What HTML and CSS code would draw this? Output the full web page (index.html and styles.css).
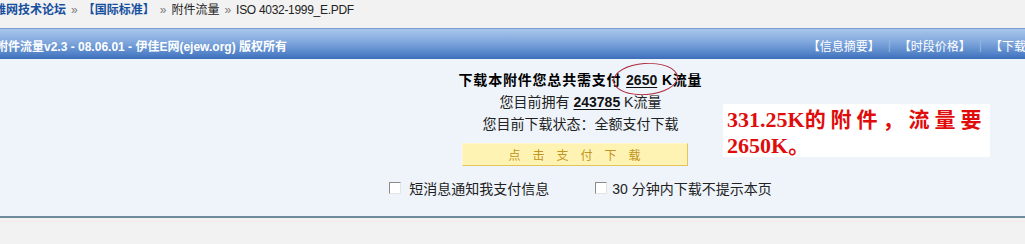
FILE: index.html
```html
<!DOCTYPE html>
<html lang="zh">
<head>
<meta charset="utf-8">
<title>附件流量</title>
<link rel="stylesheet" href="styles.css">
</head>
<body>
<div class="page">
  <div class="crumbs">
    <a class="crumb-strong" href="#">雅网技术论坛</a>
    <span class="sep">»</span>
    <a class="crumb-strong" href="#">【国际标准】</a>
    <span class="sep">»</span>
    <span>附件流量</span>
    <span class="sep">»</span>
    <span class="file">ISO 4032-1999_E.PDF</span>
  </div>

  <div class="box">
    <div class="head">
      <span class="title">附件流量v2.3 - 08.06.01 - 伊佳E网(ejew.org) 版权所有</span>
      <span class="links">
        <a href="#">【信息摘要】</a><span class="bar">|</span><a href="#">【时段价格】</a><span class="bar">|</span><a href="#">【下载记录】</a>
      </span>
    </div>
    <div class="body">
      <div class="center">
        <p class="line need">下载本附件您总共需支付 <u class="num">2650</u> K流量</p>
        <p class="line">您目前拥有 <u class="num">243785</u> K流量</p>
        <p class="line">您目前下载状态：全额支付下载</p>
        <button class="pay" type="button">点击支付下载</button>
        <div class="checks">
          <label class="check"><span class="cb"></span><span class="lbl">短消息通知我支付信息</span></label>
          <label class="check second"><span class="cb"></span><span class="lbl">30 分钟内下载不提示本页</span></label>
        </div>
      </div>
      <div class="ring"></div>
      <div class="note">331.25K<span class="cjk">的附件，流量要</span><br>2650K<span class="cjk">。</span></div>
    </div>
  </div>
  <div class="foot"></div>
</div>
</body>
</html>
```

FILE: styles.css
```css
html, body {
  margin: 0;
  padding: 0;
  background: #f2f2f2;
  overflow: hidden;
}

body {
  font-family: "Liberation Sans", "Noto Sans CJK SC", sans-serif;
  font-size: 12px;
  color: #222;
}

.page {
  margin-left: -8px;
  width: 1100px;
}

.crumbs {
  height: 20px;
  line-height: 20px;
  padding-left: 2px;
  display: flex;
  gap: 5px;
  color: #222;
  white-space: nowrap;
}

.crumbs a {
  text-decoration: none;
}

.crumb-strong {
  color: #174f9e;
  font-weight: bold;
}

.sep {
  color: #7a7a7a;
}

.file {
  letter-spacing: -0.3px;
}

.box {
  margin-top: 8px;
  border-bottom: 2px solid #6f8a9c;
}

.head {
  height: 31px;
  border-top: 1px solid #7a9ccc;
  background: linear-gradient(#a9c6ec 0%, #7ea6dc 45%, #4f80c6 85%, #3d6dba 100%);
  display: flex;
  align-items: center;
  color: #fff;
  white-space: nowrap;
  padding-top: 2px;
  box-sizing: border-box;
}

.title {
  font-weight: bold;
  padding-left: 4px;
}

.links {
  margin-left: auto;
  padding-right: 30px;
  display: flex;
  align-items: center;
}

.links a {
  color: #fff;
  text-decoration: none;
}

.bar {
  color: #9ab6dc;
  margin: 0 8px 0 8px;
}

.body {
  position: relative;
  background: #eef4fa;
  height: 157px;
  box-sizing: border-box;
  padding-top: 10px;
}

.center {
  display: flex;
  flex-direction: column;
  align-items: center;
  padding-left: 144px;
  width: 1033px;
  box-sizing: border-box;
}

.line {
  margin: 0;
  height: 22px;
  line-height: 22px;
  font-size: 14px;
  color: #222;
  white-space: nowrap;
}

.need {
  font-weight: bold;
  color: #000;
  letter-spacing: 0.8px;
}

.num {
  font-weight: bold;
  text-decoration: underline;
  text-underline-offset: 2px;
  color: #111;
  letter-spacing: 0;
}

.pay {
  margin-top: 8px;
  margin-right: 12px;
  width: 226px;
  height: 23px;
  background: #fff3b4;
  border: 1px solid #fff6cc;
  border-right-color: #e2c35e;
  border-bottom-color: #e2c35e;
  color: #bf9420;
  font-family: "Noto Sans CJK SC", sans-serif;
  font-size: 12px;
  letter-spacing: 12px;
  padding: 0 0 0 12px;
  line-height: 20px;
}

.checks {
  margin-top: 12px;
  display: flex;
  gap: 46px;
  height: 20px;
  align-items: center;
  font-size: 14px;
  white-space: nowrap;
}

.check {
  display: flex;
  align-items: center;
  gap: 8px;
}

.check.second {
  gap: 5px;
}

.cb {
  width: 10px;
  height: 10px;
  background: #fff;
  border-top: 1px solid #8a8a8a;
  border-left: 1px solid #8a8a8a;
  border-right: 1px solid #e4e4e4;
  border-bottom: 1px solid #e4e4e4;
}

.ring {
  position: absolute;
  left: 621px;
  top: 4px;
  width: 63px;
  height: 30px;
  border: 1px solid #b02c3c;
  border-radius: 50%;
  transform: rotate(-4deg);
}

.note {
  position: absolute;
  left: 731px;
  top: 45px;
  width: 267px;
  height: 53px;
  box-sizing: border-box;
  padding: 2px 0 0 4px;
  background: #fff;
  color: #e00c0c;
  font-family: "Liberation Serif", "Noto Sans CJK SC", serif;
  font-weight: bold;
  font-size: 22px;
  line-height: 25px;
  white-space: nowrap;
}

.note .cjk {
  font-family: "Noto Sans CJK SC", sans-serif;
  font-size: 21px;
  letter-spacing: 5px;
}

.foot {
  margin-top: 3px;
  height: 1px;
  background: #f6e8e8;
}
```
